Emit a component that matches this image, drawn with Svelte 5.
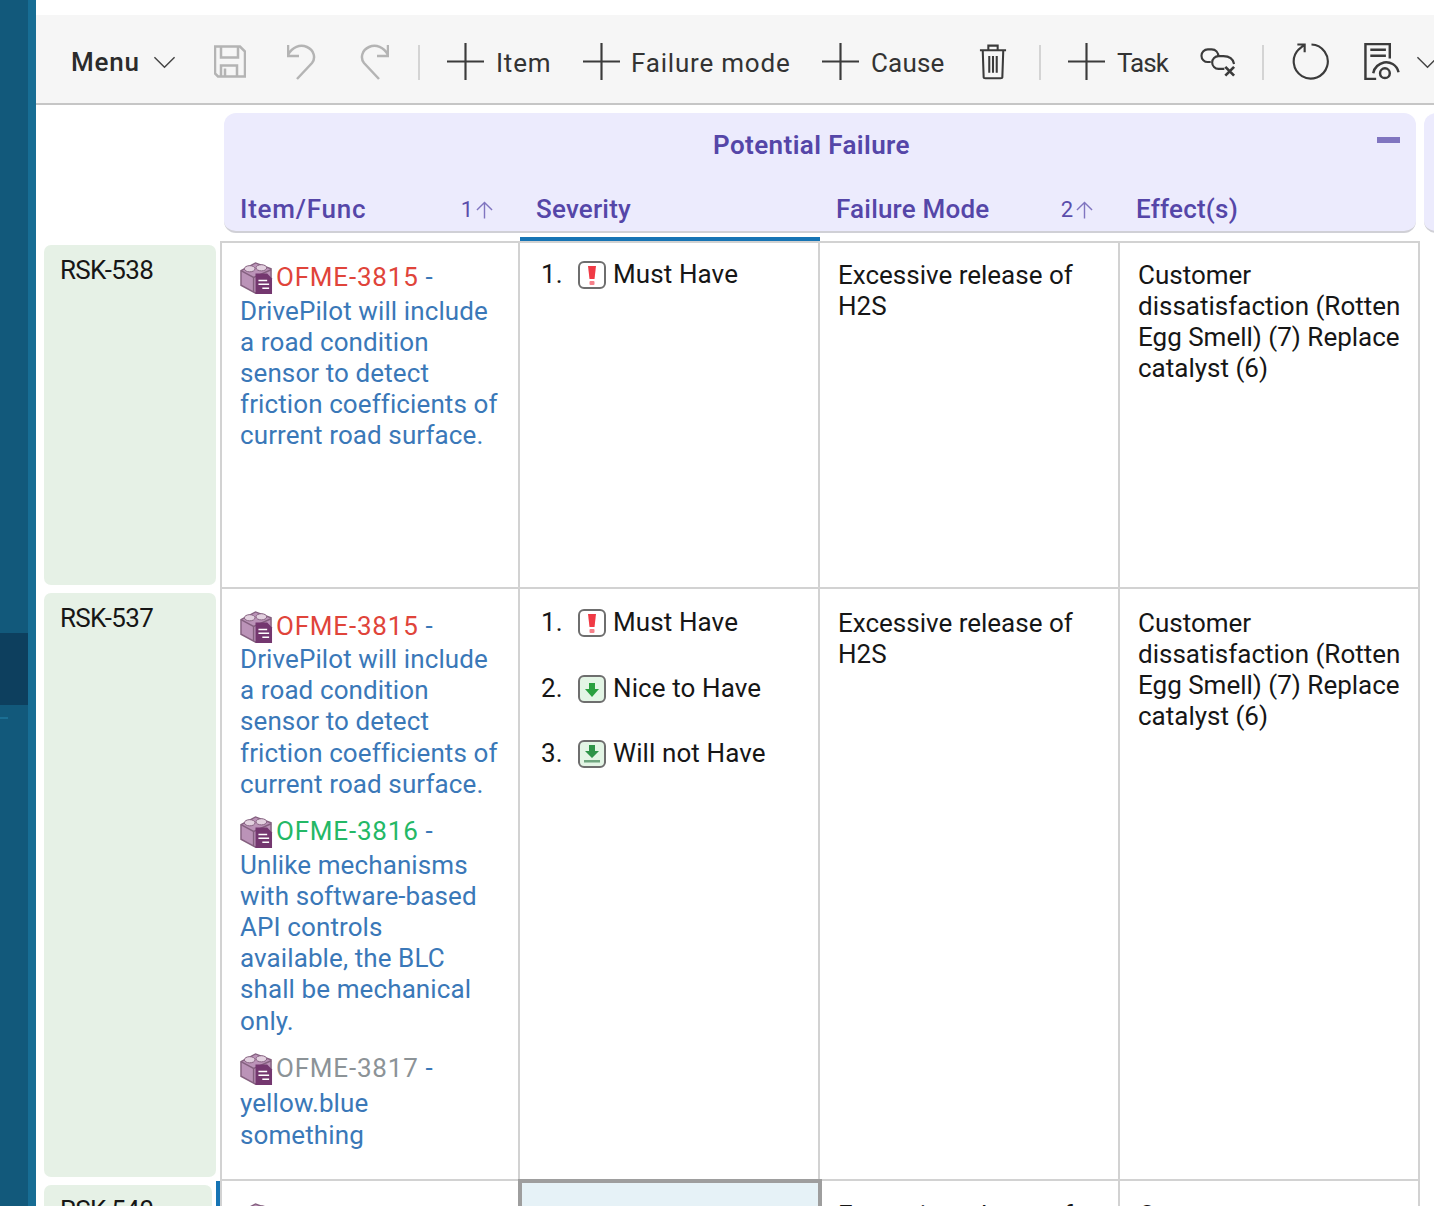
<script>
  const b1 = ['DrivePilot will include', 'a road condition', 'sensor to detect', 'friction coefficients of', 'current road surface.'];
  const b2 = ['Unlike mechanisms', 'with software-based', 'API controls', 'available, the BLC', 'shall be mechanical', 'only.'];
  const b3 = ['yellow.blue', 'something'];
  const fail = ['Excessive release of', 'H2S'];
  const effect = ['Customer', 'dissatisfaction (Rotten', 'Egg Smell) (7) Replace', 'catalyst (6)'];
  const rows = [
    { id: 'RSK-538', cls: 'r1', items: [{ code: 'OFME-3815', tone: 'red', lines: b1 }], sev: ['must'] },
    { id: 'RSK-537', cls: 'r2', items: [
      { code: 'OFME-3815', tone: 'red', lines: b1 },
      { code: 'OFME-3816', tone: 'green', lines: b2 },
      { code: 'OFME-3817', tone: 'grey', lines: b3 }
    ], sev: ['must', 'nice', 'will'] },
    { id: 'RSK-540', cls: 'r3', items: [{ code: 'OFME-3815', tone: 'red', lines: b1 }], sev: [], selected: true }
  ];
  const sevLabel = { must: 'Must Have', nice: 'Nice to Have', will: 'Will not Have' };
</script>

{#snippet plus()}
  <svg class="ico" viewBox="0 0 38 38"><path d="M19 0v38M0 19h38" /></svg>
{/snippet}
{#snippet chevron()}
  <svg class="chev" viewBox="0 0 24 14"><path d="M1.5 2 12 12.5 22.500 2" /></svg>
{/snippet}
{#snippet brick()}
  <svg class="brick" viewBox="0 0 34 34">
    <path d="M1 10 16 2l16 6v14L16 33 1 25z" fill="#bb93b8" stroke="#84607f" stroke-width="1.500" />
    <path d="M1 10l13 7 18-8" fill="none" stroke="#84607f" stroke-width="1.500" />
    <path d="M14 17v15" stroke="#84607f" stroke-width="1.500" />
    <ellipse cx="10" cy="8" rx="5.500" ry="3.200" fill="#e2d0df" stroke="#84607f" />
    <ellipse cx="22" cy="7" rx="5.500" ry="3.200" fill="#e2d0df" stroke="#84607f" />
    <path d="M16 13h12l5 5v16H16z" fill="#74376f" />
    <path d="M19 20h9M19 24h11M23 28h7" stroke="#fff" stroke-width="1.500" />
  </svg>
{/snippet}
{#snippet sevIcon(kind)}
  <svg class="sev" viewBox="0 0 28 28">
    <rect x="1" y="1" width="26" height="26" rx="5" fill={kind === 'must' ? '#fff' : '#e3f5e5'} stroke="#6e6e6e" stroke-width="2" />
    {#if kind === 'must'}
      <path d="M10 5h8l-1.500 13h-5z" fill="#f03a45" />
      <rect x="11.500" y="20" width="5" height="4" rx="1" fill="#f6808a" />
    {:else if kind === 'nice'}
      <path d="M11 8h6v6h4l-7 8-7-8h4z" fill="#2aa03f" />
    {:else}
      <path d="M11 5h6v6h4l-7 7-7-7h4z" fill="#2e9448" />
      <rect x="6" y="20" width="16" height="2.500" fill="#6fa67f" />
    {/if}
  </svg>
{/snippet}

<div class="page">
  <aside class="rail">
    <div class="rail-dark"></div>
    <div class="rail-tick"></div>
  </aside>
  <main class="main">
    <div class="toolbar">
      <span class="tl menu">Menu</span>
      <span>{@render chevron()}</span>
      <svg class="ico faint" viewBox="0 0 32 32"><path d="M1 1h25l5 5v25H4l-3-3zM7 1v11h17V1M7 31V20h16v11M11 23v8" /></svg>
      <svg class="ico faint undo" viewBox="0 0 29 36"><path d="M1 1v11h11M1 11C5 3 13 0 20 3c7 3 9 11 5 16L10 35" /></svg>
      <svg class="ico faint undo" viewBox="0 0 29 36"><path d="M28 1v11H17M28 11C24 3 16 0 9 3 2 6 0 14 4 19l15 16" /></svg>
      <span class="sep"></span>
      {@render plus()}<span class="tl wide">Item</span>
      {@render plus()}<span class="tl wide">Failure mode</span>
      {@render plus()}<span class="tl">Cause</span>
      <svg class="ico trash" viewBox="0 0 30 38"><path d="M1 7h28M10 7V2h10v5M4 7l1 29c0 1 1 1 2 1h16c1 0 2 0 2-1l1-29M11 13v18M15 13v18M19 13v18" /></svg>
      <span class="sep"></span>
      {@render plus()}<span class="tl narrow">Task</span>
      <svg class="ico link" viewBox="0 0 38 30"><path d="M19 10C19 5 16 2 12 2H8A6.500 6.500 0 0 0 8 15h3M25 22h-6A6.500 6.500 0 0 1 19 9h5c6 0 10 3 11 8" /><path class="x" d="M26 20l9 9M35 20l-9 9" /></svg>
      <span class="sep"></span>
      <svg class="ico" viewBox="0 0 38 38"><path d="M20 1.500A17.500 17.500 0 1 1 7 6.500L13 1.500M5.500 1.500H13V9.500" /></svg>
      <svg class="ico report" viewBox="0 0 36 38"><path d="M26 16V1H1v36h11M6 7h16M6 13h16M35 30c-2-8-9-11-15-10-5 1-10 5-11 11" /><circle cx="21" cy="31" r="5" /></svg>
      <span>{@render chevron()}</span>
    </div>

    <div class="head">
      <div class="group">
        <h2>Potential Failure</h2>
        <span class="collapse"></span>
        <div class="cols">
          <div class="col"><span class="c-item">Item/Func</span><span class="sort">1<svg viewBox="0 0 18 18"><path d="M9 18V1M1 9l8-8 8 8" /></svg></span></div>
          <div class="col"><span>Severity</span></div>
          <div class="col"><span>Failure Mode</span><span class="sort">2<svg viewBox="0 0 18 18"><path d="M9 18V1M1 9l8-8 8 8" /></svg></span></div>
          <div class="col"><span>Effect(s)</span></div>
        </div>
      </div>
      <div class="group next"></div>
    </div>
    <div class="underline"></div>

    <div class="grid">
      {#each rows as row}
        <div class="id-wrap {row.cls}"><div class="id">{row.id}</div></div>
        <div class="cell c-first {row.cls}">
          {#each row.items as it}
            <div class="req">
              <div class="req-head">{@render brick()}<span class="code {it.tone}">{it.code}</span><span class="dash">-</span></div>
              {#each it.lines as line}<div class="req-text">{line}</div>{/each}
            </div>
          {/each}
        </div>
        <div class="cell {row.cls}" class:selected={row.selected}>
          {#if row.sev.length}
            <ol>
              {#each row.sev as s, i}
                <li><span class="num">{i + 1}.</span>{@render sevIcon(s)}<span>{sevLabel[s]}</span></li>
              {/each}
            </ol>
          {/if}
        </div>
        <div class="cell txt {row.cls}">{#each fail as line}<div>{line}</div>{/each}</div>
        <div class="cell txt {row.cls}">{#each effect as line}<div>{line}</div>{/each}</div>
      {/each}
    </div>
  </main>
</div>

<style>
  :global(body) { margin: 0; background: #fff; }
  .page {
    width: 1434px; height: 1206px; overflow: hidden; display: flex;
    font-family: Roboto, "Liberation Sans", sans-serif; font-size: 26px; line-height: 31.200px; color: #161616;
  }
  .rail { width: 28px; border-right: 8px solid #176d94; background: #12597b; flex: none; position: relative; }
  .rail-dark { position: absolute; left: 0; right: 0; top: 633px; height: 72px; background: #0d3f5e; }
  .rail-tick { position: absolute; left: 0; top: 717px; width: 8px; height: 2px; background: #1b6f94; }
  .main { flex: 1; min-width: 0; padding-top: 15px; }
  .toolbar {
    height: 88px; background: #f6f6f6; border-bottom: 2px solid #c6c6c6;
    display: grid; align-items: center; justify-items: start; padding-left: 35px;
    grid-template-columns: 82px 61px 73px 73px 58px 29px 49px 87px 48px 191px 49px 108px 60px 29px 49px 83px 62px 30px 72px 52px 40px;
    color: #333;
  }
  .tl { letter-spacing: .2px; margin-top: 8px; line-height: 30px; }
  .wide { letter-spacing: .8px; }
  .narrow { letter-spacing: -1px; }
  .menu { font-weight: 500; color: #2b2b2b; margin-top: 6px; letter-spacing: .8px; }
  .ico { width: 37px; height: 37px; margin-top: 5px; fill: none; stroke: #3b3b3b; stroke-width: 2.200; display: block; }
  .faint { width: 32px; height: 33px; stroke: #b4b4b4; stroke-width: 2.500; }
  .undo { width: 29px; height: 36px; }
  .trash { width: 28px; }
  .link { height: 30px; margin-top: 6px; }
  .x { stroke-width: 2.800; }
  .report { width: 36px; stroke-width: 2.500; }
  .chev { width: 23px; height: 14px; margin-top: 5px; fill: none; stroke: #444; stroke-width: 1.500; display: block; }
  .sep { width: 2px; height: 35px; background: #d4d4d4; margin-top: 6px; }

  .head { display: flex; gap: 8px; padding: 8px 0 0 188px; width: 1600px; }
  .group {
    width: 1192px; height: 120px; flex: none; box-sizing: border-box; background: #ecebfd; border-radius: 12px;
    border-bottom: 2px solid #d0d0d6; position: relative; color: #5546a8; font-weight: 500;
  }
  .next { width: 100px; }
  h2 { margin: 0; padding: 17px 17px 0 0; font: inherit; font-weight: 600; line-height: 31px; text-align: center; letter-spacing: .4px; }
  .collapse { position: absolute; right: 16px; top: 24px; width: 23px; height: 6px; background: #8075c0; }
  .cols { display: grid; grid-template-columns: 296px 300px 300px 300px; padding: 33px 0 0 16px; line-height: 31px; letter-spacing: .2px; }
  .col { display: flex; justify-content: space-between; padding-right: 43px; font-weight: 500; }
  .c-item { letter-spacing: .8px; }
  .sort { font-weight: 400; font-size: 22px; color: #5a4dab; display: flex; align-items: center; letter-spacing: 0; }
  .sort svg { width: 17px; height: 18px; margin-left: 3px; fill: none; stroke: #8075c0; stroke-width: 1.500; }

  .underline { width: 300px; height: 4px; margin: 4px 0 0 484px; background: #1674b4; }

  .grid { display: grid; grid-template-columns: 184px 300px 300px 300px 300px; grid-template-rows: 348px 592px 200px; }
  .id-wrap { padding: 4px 4px 4px 8px; }
  .id-wrap.r3 { border-right: 4px solid #1674b4; padding-right: 4px; }
  .id { height: 100%; box-sizing: border-box; padding: 10px 16px; background: #e6f1e6; border-radius: 7px; line-height: 31px; letter-spacing: -.7px; }
  .cell { border-right: 2px solid #d2d2d2; border-bottom: 2px solid #d2d2d2; padding: 19.500px 18px 0; box-sizing: border-box; height: 100%; overflow: hidden; white-space: nowrap; }
  .cell.r1 { padding-top: 17.100px; border-top: 2px solid #d2d2d2; }
  .cell.txt { padding-top: 18.800px; }
  .cell.txt.r1 { padding-top: 16.800px; }
  .c-first { border-left: 2px solid #d2d2d2; padding-left: 18px; padding-right: 20px; width: 300px; }
  .req { margin-bottom: 14.100px; }
  .req:nth-child(3) .req-head { margin-bottom: 2px; }
  .req-head { display: flex; align-items: center; height: 35.500px; }
  .brick { width: 33px; height: 33px; margin-right: 3px; flex: none; }
  .code { letter-spacing: .8px; }
  .red { color: #e0443a; } .green { color: #24b866; } .grey { color: #8c9397; }
  .dash { margin-left: 7px; }
  .dash, .req-text { color: #3a78b8; }
  .req-text { letter-spacing: .1px; }
  ol { list-style: none; margin: -1px 0 0 3px; padding: 0; }
  li { display: flex; align-items: center; height: 31px; margin-bottom: 34.500px; letter-spacing: .1px; }
  .num { width: 37px; }
  .sev { width: 28px; height: 28px; margin-right: 7px; flex: none; }
  .selected { background: #e6f2f7; border: 4px solid #9e9e9e; margin: -2px 0 0 -2px; width: 304px; position: relative; z-index: 1; }
</style>
